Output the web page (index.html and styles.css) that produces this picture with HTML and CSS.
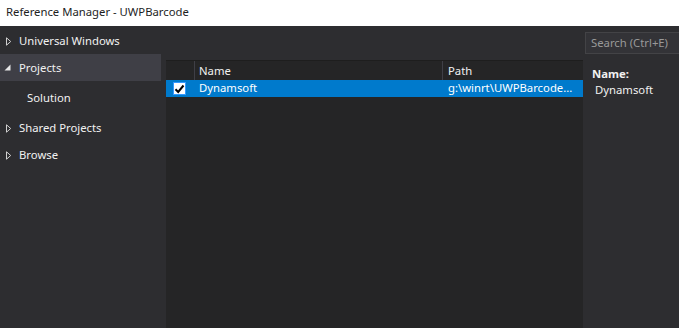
FILE: index.html
```html
<!DOCTYPE html>
<html lang="en">
<head>
    <meta charset="UTF-8">
    <title>Reference Manager - UWPBarcode</title>
    <link rel="stylesheet" href="styles.css">
</head>
<body>
    <div class="titlebar">Reference Manager - UWPBarcode</div>

    <div class="main">
        <div class="sidebar">
            <div class="nav-item">
                <svg class="arrow" width="6" height="9" viewBox="0 0 6 9"><path d="M0.5 0.8 L4.7 4.5 L0.5 8.2 Z" fill="none" stroke="#d0d0d0" stroke-width="1"/></svg>
                Universal Windows
            </div>
            <div class="nav-item selected">
                <svg class="arrow" width="7" height="7" viewBox="0 0 7 7"><path d="M6.5 0.5 L6.5 6.5 L0.5 6.5 Z" fill="#e8e8e8"/></svg>
                Projects
            </div>
            <div class="nav-item sub">Solution</div>
            <div class="nav-item">
                <svg class="arrow" width="6" height="9" viewBox="0 0 6 9"><path d="M0.5 0.8 L4.7 4.5 L0.5 8.2 Z" fill="none" stroke="#d0d0d0" stroke-width="1"/></svg>
                Shared Projects
            </div>
            <div class="nav-item">
                <svg class="arrow" width="6" height="9" viewBox="0 0 6 9"><path d="M0.5 0.8 L4.7 4.5 L0.5 8.2 Z" fill="none" stroke="#d0d0d0" stroke-width="1"/></svg>
                Browse
            </div>
        </div>

        <div class="center">
            <div class="list">
                <div class="list-head">
                    <div class="col-check"></div>
                    <div class="col-name">Name</div>
                    <div class="col-path">Path</div>
                </div>
                <div class="list-row active">
                    <div class="col-check"><span class="checkbox">
                        <svg width="11" height="10" viewBox="0 0 11 10"><path d="M1.5 5.2 L4.2 8 L9.5 1.5" fill="none" stroke="#000" stroke-width="2"/></svg>
                    </span></div>
                    <div class="col-name">Dynamsoft</div>
                    <div class="col-path">g:\winrt\UWPBarcode...</div>
                </div>
            </div>
        </div>

        <div class="details">
            <div class="search">Search (Ctrl+E)</div>
            <div class="info">
                <div class="info-label">Name:</div>
                <div class="info-value">Dynamsoft</div>
            </div>
        </div>
    </div>
</body>
</html>
```

FILE: styles.css
```css
* {
    margin: 0;
    padding: 0;
    box-sizing: border-box;
}

body {
    width: 679px;
    height: 328px;
    overflow: hidden;
    background-color: #2d2d30;
    font-family: "Noto Sans", "Open Sans", sans-serif;
    font-size: 11.3px;
    color: #f1f1f1;
}

.titlebar {
    height: 26px;
    line-height: 24px;
    padding-left: 6px;
    background-color: #ffffff;
    color: #1e1e1e;
}

.main {
    display: flex;
    height: 302px;
}

/* left navigation */
.sidebar {
    width: 166px;
    padding-top: 1px;
    padding-right: 5px;
}

.nav-item {
    height: 27px;
    line-height: 27px;
    padding-left: 19px;
    position: relative;
}

.nav-item.selected {
    background-color: #3f3f46;
}

.nav-item.sub {
    height: 33px;
    line-height: 34px;
    padding-left: 27px;
}

.arrow {
    position: absolute;
    left: 6px;
    top: 10px;
}

.selected .arrow {
    left: 4px;
    top: 10px;
}

/* project list */
.center {
    width: 417px;
    padding-top: 34px;
}

.list {
    height: 100%;
    background-color: #252526;
}

.list-head,
.list-row {
    display: flex;
}

.list-head {
    height: 20px;
    line-height: 19px;
    border-top: 1px solid #1e1e1e;
}

.list-head > div {
    border-right: 1px solid #3f3f46;
}

.list-head .col-path {
    border-right: none;
}

.list-row {
    height: 17px;
    line-height: 16px;
}

.list-row.active {
    background-color: #007acc;
    color: #ffffff;
}

.col-check {
    width: 29px;
    flex-shrink: 0;
}

.col-name {
    width: 248px;
    padding-left: 4px;
    flex-shrink: 0;
}

.col-path {
    flex: 1;
    padding-left: 5px;
    white-space: nowrap;
    overflow: hidden;
}

.checkbox {
    display: flex;
    align-items: center;
    justify-content: center;
    width: 13px;
    height: 13px;
    margin: 2px 0 0 7px;
    background-color: #ffffff;
    border: 1px solid #3399ff;
}

/* right details */
.details {
    flex: 1;
    padding-top: 6px;
    padding-left: 2px;
}

.search {
    height: 22px;
    line-height: 20px;
    padding-left: 5px;
    background-color: #333337;
    border: 1px solid #434346;
    border-right: none;
    color: #999999;
}

.info {
    padding: 12px 0 0 7px;
    line-height: 16px;
}

.info-label {
    font-weight: bold;
}

.info-value {
    padding-left: 3px;
}
```
